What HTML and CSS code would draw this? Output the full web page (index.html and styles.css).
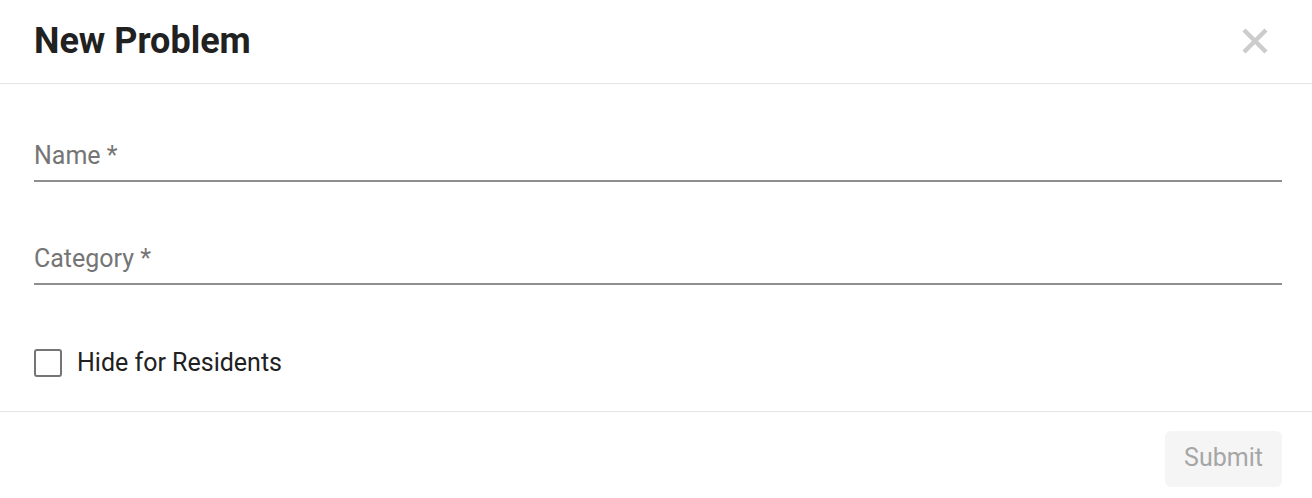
FILE: index.html
```html
<!DOCTYPE html>
<html lang="en">
  <head>
    <meta charset="UTF-8" />
    <title>New Problem</title>
    <link rel="stylesheet" href="styles.css">
  </head>
  <body>
    <div class="dialog">
      <!-- Header -->
      <header class="dialog-header">
        <h1>New Problem</h1>
        <button class="close-btn" aria-label="Close">
          <svg width="28" height="28" viewBox="0 0 28 28">
            <path d="M3 3 L25 25 M25 3 L3 25" stroke="#cccccc" stroke-width="4.5" fill="none" />
          </svg>
        </button>
      </header>

      <!-- Form -->
      <form class="dialog-body">
        <label class="field">
          <input type="text" placeholder="Name *" />
        </label>
        <label class="field">
          <input type="text" placeholder="Category *" />
        </label>
        <label class="check">
          <span class="box"></span>
          <span>Hide for Residents</span>
        </label>
      </form>

      <!-- Footer -->
      <footer class="dialog-footer">
        <button class="submit" disabled>Submit</button>
      </footer>
    </div>
  </body>
</html>
```

FILE: styles.css
```css
* {
  box-sizing: border-box;
  margin: 0;
  padding: 0;
}

body {
  font-family: Roboto, "Noto Sans", Arial, sans-serif;
  background: #fff;
  color: #212121;
}

.dialog {
  width: 1312px;
  height: 498px;
}

/* Header */
.dialog-header {
  display: flex;
  justify-content: space-between;
  align-items: center;
  height: 84px;
  padding: 0 43px 0 34px;
  border-bottom: 1px solid #e6e6e6;
}

.dialog-header h1 {
  font-size: 36px;
  font-weight: 700;
  color: #212121;
  padding-bottom: 2px;
}

.close-btn {
  background: none;
  border: none;
  width: 28px;
  height: 28px;
  margin-bottom: 2px;
}

/* Body */
.dialog-body {
  display: flex;
  flex-direction: column;
  padding: 51px 30px 0 34px;
  height: 328px;
  border-bottom: 1px solid #e6e6e6;
}

.field {
  display: block;
  margin-bottom: 56px;
}

.field input {
  display: block;
  width: 100%;
  height: 47px;
  font-family: inherit;
  font-size: 25px;
  color: #212121;
  border: none;
  border-bottom: 2px solid #8e8e8e;
  padding: 0 0 4px 0;
  outline: none;
  background: transparent;
}

.field input::placeholder {
  color: #757575;
}

.check {
  display: flex;
  align-items: center;
  gap: 15px;
  font-size: 25px;
  color: #212121;
  margin-top: 7px;
}

.box {
  width: 28px;
  height: 28px;
  border: 2.5px solid #757575;
  border-radius: 3px;
}

/* Footer */
.dialog-footer {
  display: flex;
  justify-content: flex-end;
  padding: 19px 30px 0 0;
}

.submit {
  width: 117px;
  height: 56px;
  padding-bottom: 3px;
  background: #f5f5f5;
  border: none;
  border-radius: 6px;
  font-family: inherit;
  font-size: 25px;
  color: #a6a6a6;
}
```
